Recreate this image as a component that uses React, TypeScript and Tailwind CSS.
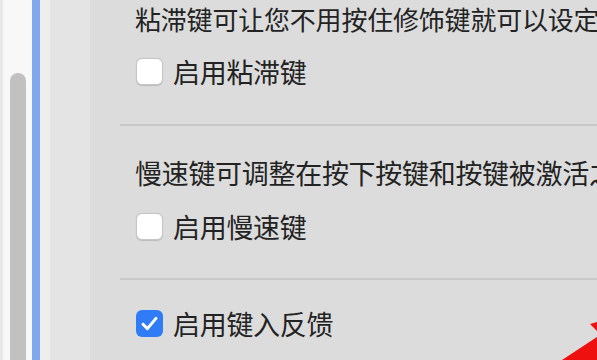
import React from "react";

const font = { fontFamily: '"Noto Sans CJK SC", "Noto Sans", sans-serif' };

function Box({ checked }: { checked?: boolean }) {
  if (checked) {
    return (
      <div className="w-[27px] h-[27px] rounded-[6px] bg-[#2f7cf6] flex items-center justify-center shrink-0">
        <svg width="27" height="27" viewBox="0 0 27 27">
          <path d="M7 14.2 L11.4 18.6 L20 8.4" fill="none" stroke="white" strokeWidth="3" strokeLinecap="round" strokeLinejoin="round" />
        </svg>
      </div>
    );
  }
  return <div className="w-[27px] h-[27px] rounded-[6px] bg-white border border-[#c6c6c6] shadow-[0_0.5px_1px_rgba(0,0,0,0.15)] shrink-0" />;
}

function Check({ label, checked }: { label: string; checked?: boolean }) {
  return (
    <div className="h-[27px] flex items-center pl-[46px] gap-[10px]">
      <Box checked={checked} />
      <span className="text-[27px] leading-none tracking-[-0.3px] text-[#232323] whitespace-nowrap">{label}</span>
    </div>
  );
}

export default function App() {
  return (
    <div className="relative w-[597px] h-[360px] overflow-hidden flex bg-[#dcdcdc]" style={font}>
      <div className="w-[3px] bg-[#e8e8e8]" />
      <div className="w-[7px] bg-[#f8f8f8]" />
      <div className="w-[16px] bg-[#f8f8f8] flex flex-col">
        <div className="h-[73px]" />
        <div className="flex-1 bg-[#c1c1c1] rounded-t-[8px]" />
      </div>
      <div className="w-[6px] bg-[#f8f8f8]" />
      <div className="w-[8px] bg-[#80a8ee]" />
      <div className="w-[10px] bg-[#eeeeee]" />
      <div className="w-[40px] bg-[#e4e4e4]" />
      <div className="flex-1 flex flex-col min-w-0 bg-[#dcdcdc]">
        <div className="h-[38px] flex items-center pl-[45px] text-[26px] leading-none tracking-[-0.2px] text-[#232323] whitespace-nowrap">
          粘滞键可让您不用按住修饰键就可以设定
        </div>
        <div className="mt-[20px]">
          <Check label="启用粘滞键" />
        </div>
        <div className="mt-[39px] ml-[30px] h-[2px] bg-[#c8c8c8]" />
        <div className="mt-[27px] h-[38px] flex items-center pl-[45px] text-[27px] leading-none tracking-[-0.3px] text-[#232323] whitespace-nowrap">
          慢速键可调整在按下按键和按键被激活之
        </div>
        <div className="mt-[22px]">
          <Check label="启用慢速键" />
        </div>
        <div className="mt-[38px] ml-[30px] h-[2px] bg-[#c8c8c8]" />
        <div className="mt-[30px]">
          <Check label="启用键入反馈" checked />
        </div>
      </div>
      <svg className="absolute left-0 top-0 pointer-events-none" width="597" height="360" viewBox="0 0 597 360">
        <polygon points="562,360 597,337 597,360" fill="#ee0f0f" />
        <polygon points="590,324 597,322 597,331" fill="#ee0f0f" />
      </svg>
    </div>
  );
}
